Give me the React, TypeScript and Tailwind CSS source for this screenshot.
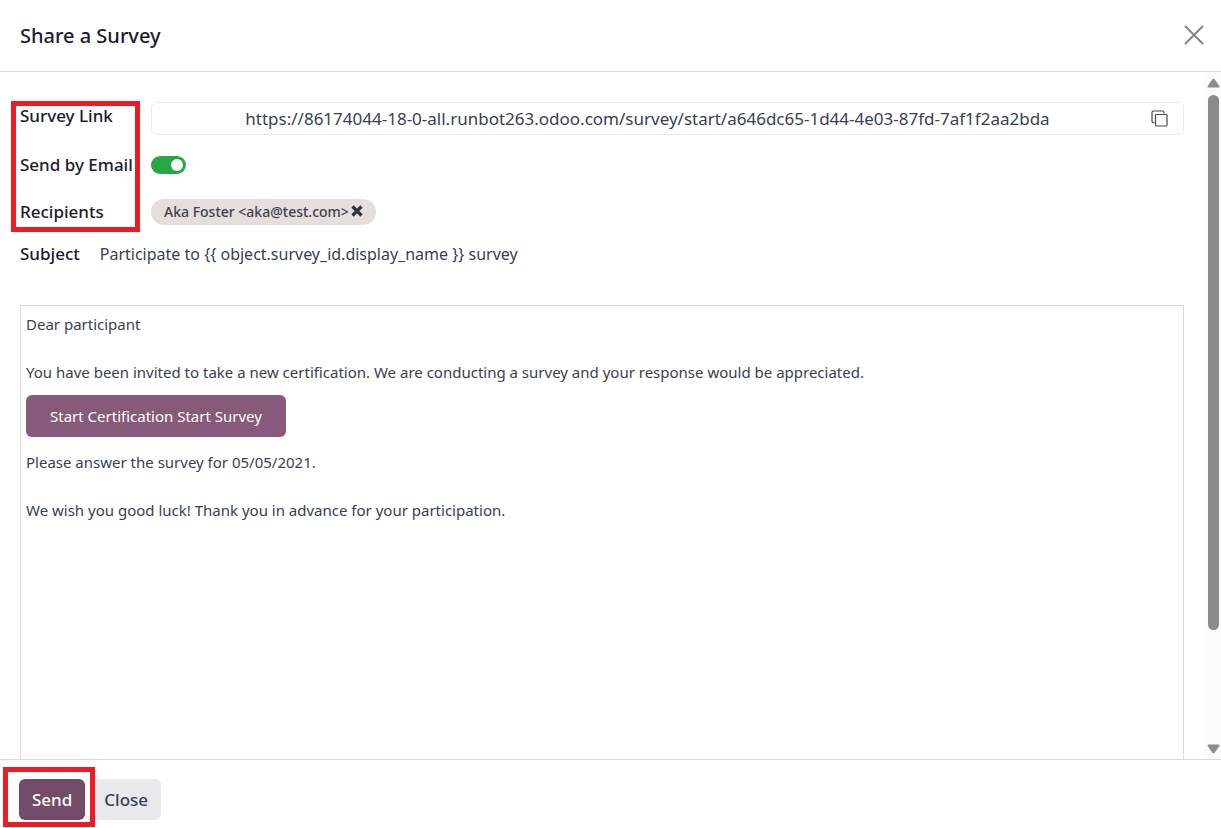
import React, { useState } from 'react';

const SURVEY_URL =
  'https://86174044-18-0-all.runbot263.odoo.com/survey/start/a646dc65-1d44-4e03-87fd-7af1f2aa2bda';

const Highlight: React.FC<{ className: string }> = ({ className }) => (
  <div className={`pointer-events-none absolute border-5 border-[#ed1c24] ${className}`} aria-hidden="true"></div>
);

const CopyIcon: React.FC = () => (
  <svg width="17" height="17" viewBox="0 0 17 17" fill="none" stroke="#4b4453" strokeWidth="1.2">
    <rect x="4.5" y="4.5" width="11.5" height="11.5" rx="0.5" />
    <path d="M3.5 12.5h-1a1.5 1.5 0 0 1-1.5-1.5V2.5a1.5 1.5 0 0 1 1.5-1.5h9a1.5 1.5 0 0 1 1.5 1.5v1" />
  </svg>
);

const ScrollBar: React.FC = () => (
  <div className="flex w-[17px] shrink-0 flex-col items-end bg-[#fbfbfb] pt-1.5 pr-px pb-[5px]" aria-hidden="true">
    <svg width="13" height="10" viewBox="0 0 13 10" fill="#8b8b8b">
      <path d="M5.6 0.9Q6.5 0 7.4 0.9L12.4 8Q12.8 9.5 11.5 9.5H1.5Q0.2 9.5 0.6 8Z" />
    </svg>
    <div className="my-[7px] flex-1 pr-px">
      <div className="h-5/6 w-[11px] rounded-full bg-[#8b8b8b]"></div>
    </div>
    <svg width="13" height="10" viewBox="0 0 13 10" fill="#8b8b8b">
      <path d="M5.6 9.1Q6.5 10 7.4 9.1L12.4 2Q12.8 0.5 11.5 0.5H1.5Q0.2 0.5 0.6 2Z" />
    </svg>
  </div>
);

const labelClass = 'w-[111px] shrink-0 whitespace-nowrap text-[17px] leading-7 font-medium text-[#1b1b2f]';

const App: React.FC = () => {
  const [byEmail, setByEmail] = useState(true);
  const [recipients, setRecipients] = useState(['Aka Foster <aka@test.com>']);
  const [subject, setSubject] = useState('Participate to {{ object.survey_id.display_name }} survey');

  return (
    <div className="flex h-screen flex-col bg-white font-['Noto_Sans','Open_Sans',sans-serif] text-base leading-7 text-[#374151]">
      <header className="flex items-center justify-between border-b border-[#d8dadd] px-5 pt-[22px] pb-[21px]">
        <h1 className="text-xl leading-7 font-medium text-[#1b1b2f]">Share a Survey</h1>
        <button type="button" aria-label="Close dialog" className="-mr-1">
          <svg width="22" height="24" viewBox="0 0 22 24" stroke="#858585" strokeWidth="2" strokeLinecap="round">
            <path d="M2.5 2.5l17 17M19.5 2.5l-17 17" />
          </svg>
        </button>
      </header>

      <div className="flex min-h-0 flex-1">
        <main className="flex min-w-0 flex-1 flex-col overflow-hidden px-5 pt-[30px]">
          <div className="relative flex flex-col gap-5">
            <Highlight className="-top-px -left-[9px] h-[131px] w-[129px]" />
            <div className="flex items-start gap-5">
              <label htmlFor="survey-link" className={labelClass}>Survey Link</label>
              <div className="flex h-[33px] min-w-0 flex-1 items-center rounded-md border border-[#e7e9ed]">
                <input
                  id="survey-link"
                  type="text"
                  readOnly
                  value={SURVEY_URL}
                  className="min-w-0 flex-1 bg-transparent text-center text-[17px] focus:outline-none"
                />
                <button type="button" aria-label="Copy link" className="pr-[15px] pl-2">
                  <CopyIcon />
                </button>
              </div>
            </div>
            <div className="flex h-5 items-center gap-5">
              <label htmlFor="send-email" className={labelClass}>Send by Email</label>
              <input
                id="send-email"
                type="checkbox"
                role="switch"
                checked={byEmail}
                onChange={(e) => setByEmail(e.target.checked)}
                className="flex h-[18px] w-[35px] appearance-none items-center rounded-full bg-gray-300 px-[3px] before:size-3 before:rounded-full before:bg-white checked:justify-end checked:bg-[#28a745]"
              />
            </div>
            <div className="flex h-[33px] items-center gap-5">
              <span className={labelClass}>Recipients</span>
              {recipients.map((name) => (
                <span
                  key={name}
                  className="flex h-[26px] items-center gap-0.5 rounded-full bg-[#e6dddd] px-[13px] text-sm font-medium text-[#41414d]"
                >
                  {name}
                  <button type="button" aria-label={`Remove ${name}`} onClick={() => setRecipients([])}>
                    <svg width="12" height="14" viewBox="0 0 12 14" stroke="#33333f" strokeWidth="3.2">
                      <path d="M1.5 1.5l9 9M10.5 1.5l-9 9" />
                    </svg>
                  </button>
                </span>
              ))}
            </div>
          </div>

          <div className="mt-3 flex items-center gap-5">
            <label htmlFor="subject" className="text-[17px] leading-7 font-medium text-[#1b1b2f]">Subject</label>
            <input
              id="subject"
              type="text"
              value={subject}
              onChange={(e) => setSubject(e.target.value)}
              className="min-w-0 flex-1 focus:outline-none"
            />
          </div>

          <section className="mt-[37px] flex-1 border border-b-0 border-[#d8dadd] px-[5px] pt-1.5 text-[15px] leading-6">
            <p>Dear participant</p>
            <p className="mt-6">
              You have been invited to take a new certification. We are conducting a survey and your response would be appreciated.
            </p>
            <a href="#start" className="mt-[11px] inline-block rounded-md bg-[#875a7b] px-6 py-[9px] text-white">
              Start Certification Start Survey
            </a>
            <p className="mt-[13px]">Please answer the survey for 05/05/2021.</p>
            <p className="mt-6">We wish you good luck! Thank you in advance for your participation.</p>
          </section>
        </main>
        <ScrollBar />
      </div>

      <footer className="flex gap-[6px] border-t border-[#d8dadd] px-[19px] pt-[19px] pb-2 text-[17px] font-medium">
        <div className="relative flex">
          <Highlight className="-top-3 -left-4 h-[60px] w-[92px]" />
          <button type="button" className="h-[41px] rounded-md bg-[#714b67] px-[13px] text-white">Send</button>
        </div>
        <button type="button" className="h-[41px] rounded-md bg-[#e7e9ed] px-[13px] text-[#374151]">Close</button>
      </footer>
    </div>
  );
};

export default App;
